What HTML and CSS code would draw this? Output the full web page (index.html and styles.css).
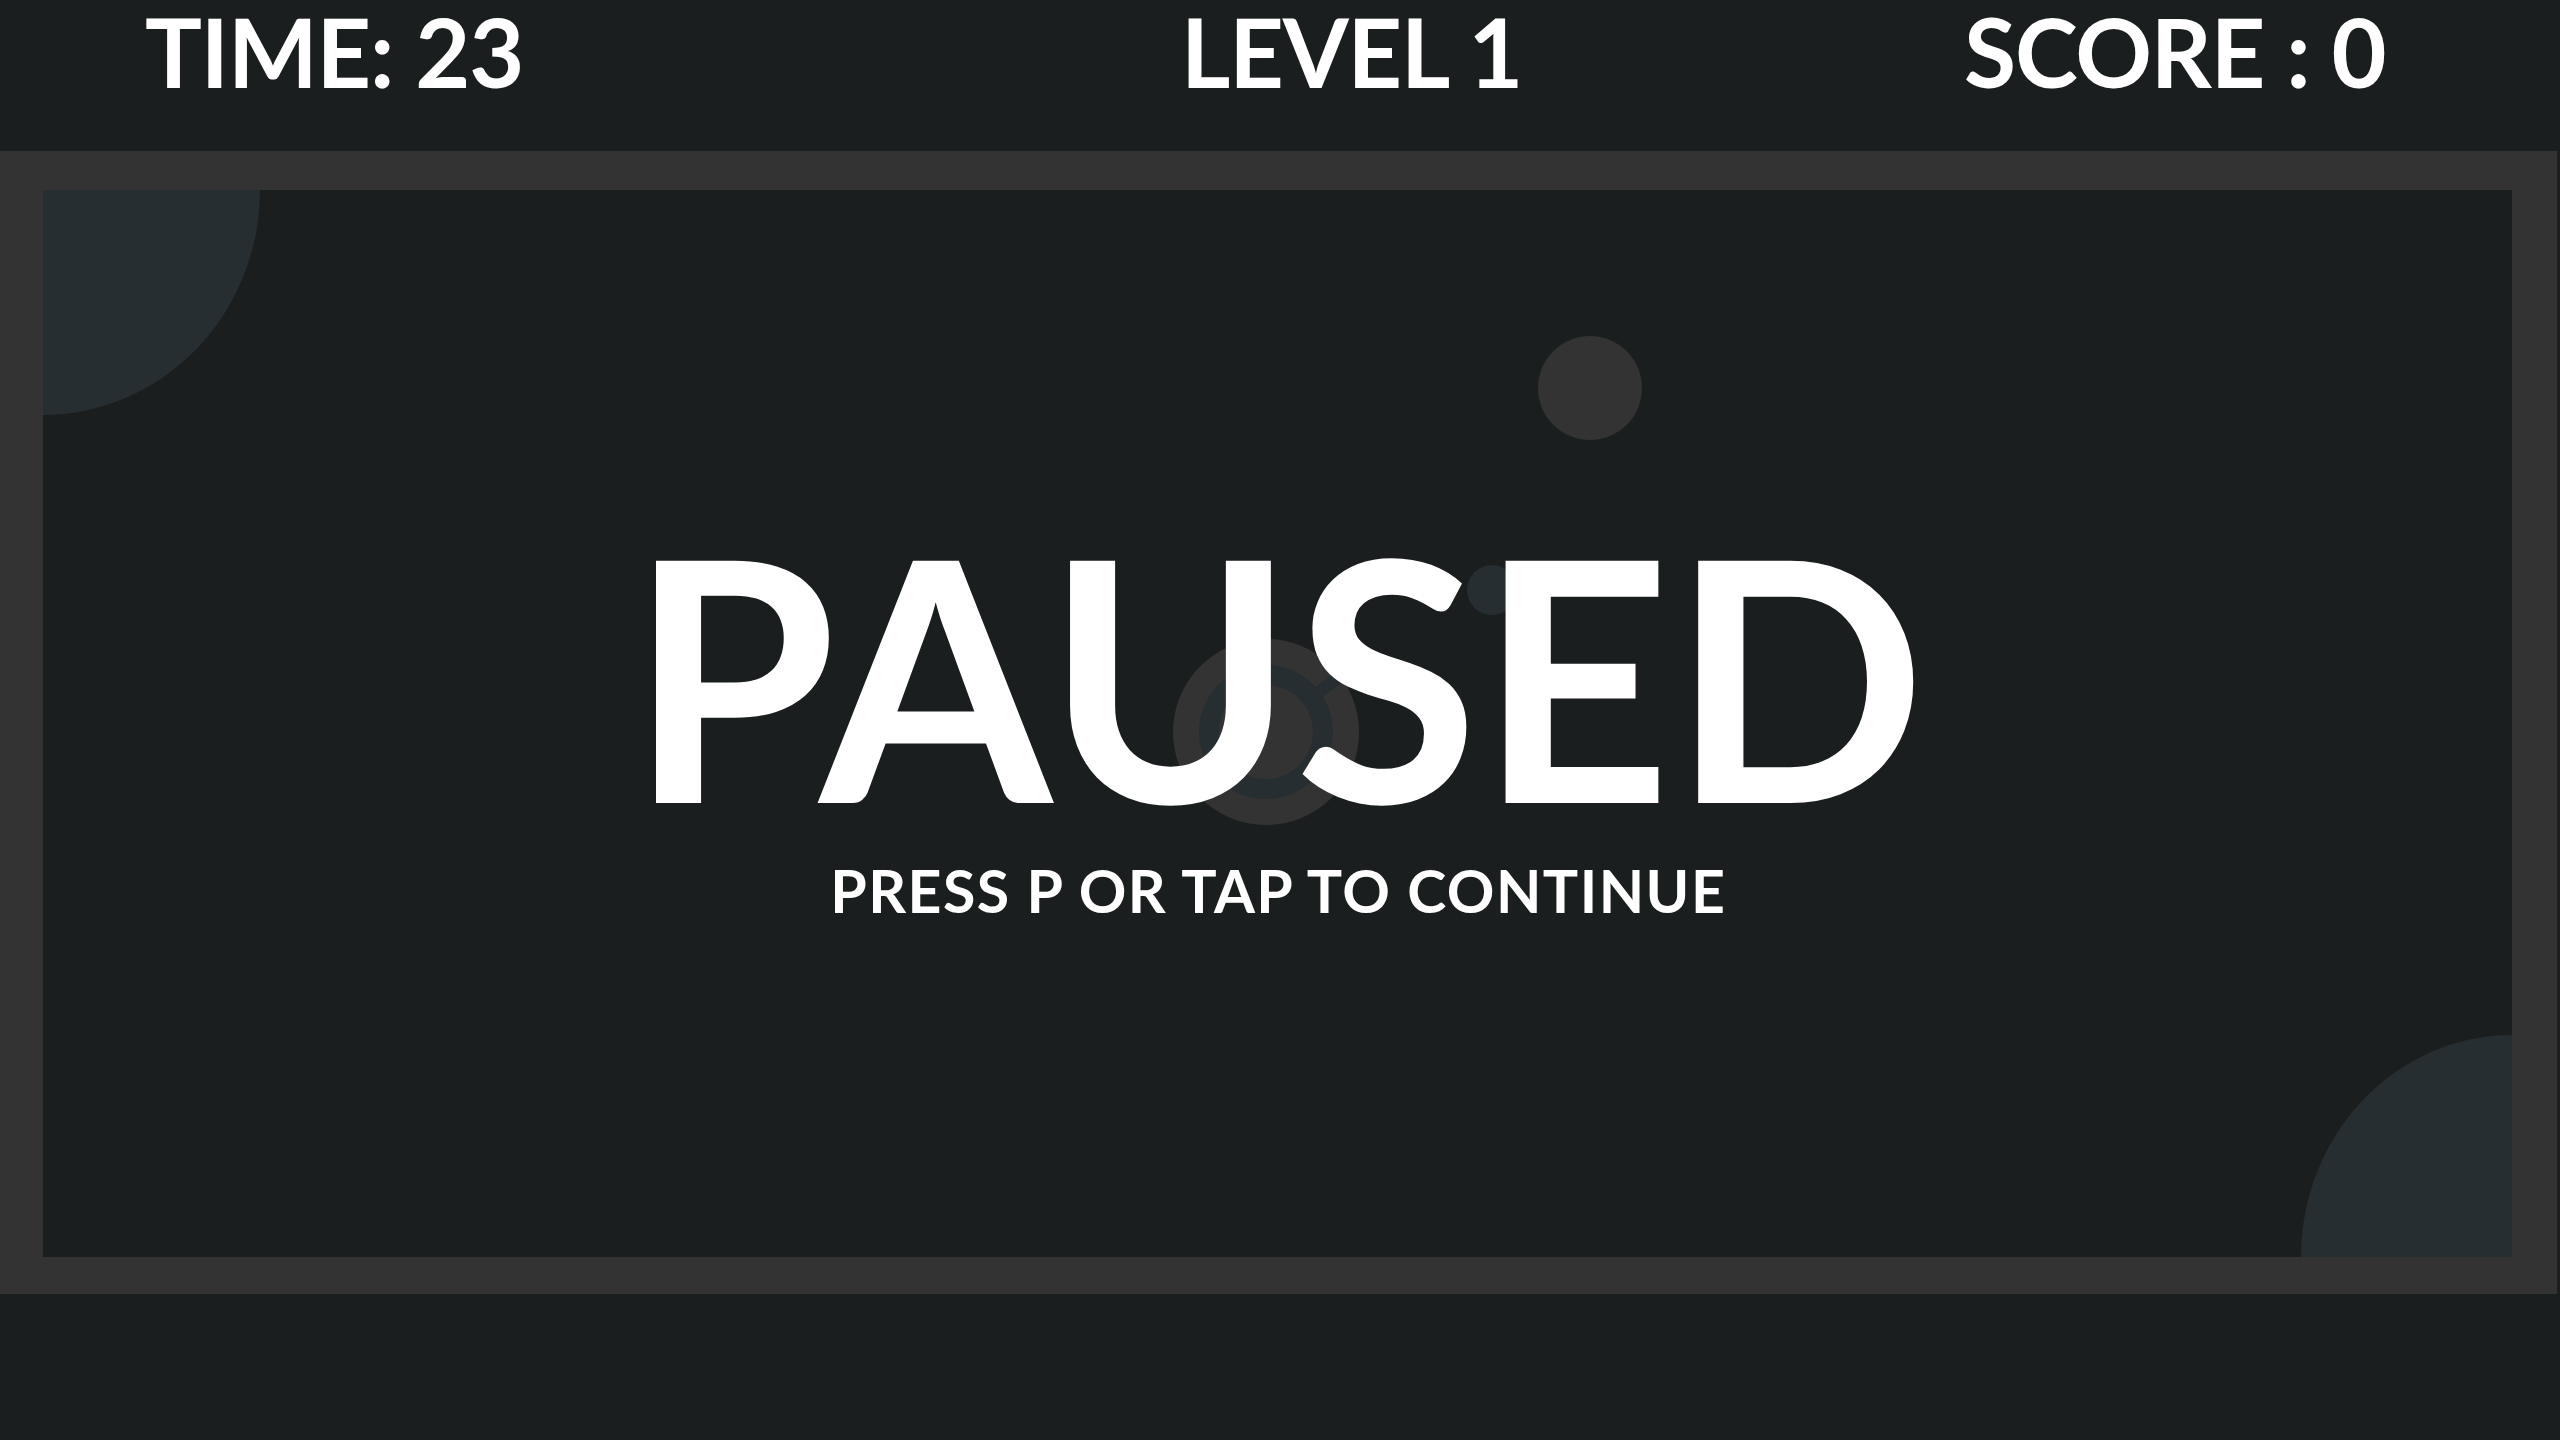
FILE: index.html
```html
<!DOCTYPE html>
<html lang="en">
<head>
<meta charset="utf-8">
<title>Paused</title>
<link rel="stylesheet" href="styles.css">
</head>
<body>
<header class="hud">
  <div class="hud-item">TIME: 23</div>
  <div class="hud-item">LEVEL 1</div>
  <div class="hud-item">SCORE : 0</div>
</header>
<main class="frame">
  <div class="arena">
    <svg class="scene" width="2469" height="1067" viewBox="0 0 2469 1067" xmlns="http://www.w3.org/2000/svg">
      <ellipse cx="0" cy="0" rx="217" ry="225" fill="#262e31"/>
      <ellipse cx="2469" cy="1067" rx="211" ry="222" fill="#262e31"/>
      <circle cx="1547" cy="198" r="52" fill="#333333"/>
      <circle cx="1449" cy="400" r="25" fill="#262e31"/>
      <g class="turret">
        <circle cx="1223" cy="542" r="93" fill="#333333"/>
        <g transform="translate(1223 542) rotate(-37)">
          <rect x="0" y="-6" width="112" height="12" fill="#262e31"/>
          <rect x="96" y="-20" width="15" height="40" fill="#262e31"/>
        </g>
        <circle cx="1223" cy="542" r="67" fill="#262e31"/>
        <circle cx="1223" cy="542" r="47" fill="#333333"/>
      </g>
    </svg>
    <div class="overlay">
      <h1 class="title">PAUSED</h1>
      <p class="hint">PRESS P OR TAP TO CONTINUE</p>
    </div>
  </div>
</main>
</body>
</html>
```

FILE: styles.css
```css
html, body {
  margin: 0;
  padding: 0;
  background: #1b1e1f;
  color: #ffffff;
  font-family: "Lato", "Open Sans", sans-serif;
  font-weight: 700;
  overflow: hidden;
}

.hud {
  height: 151px;
  box-sizing: border-box;
  padding: 4px 0 0 145px;
  display: grid;
  grid-template-columns: 1036px 783px auto;
  align-items: start;
}

.hud-item {
  font-size: 95px;
  line-height: 1;
  letter-spacing: -0.012em;
  white-space: nowrap;
}

.frame {
  width: 2557px;
  box-sizing: border-box;
  border-style: solid;
  border-color: #333333;
  border-width: 39px 45px 37px 43px;
}

.arena {
  position: relative;
  height: 1067px;
  overflow: hidden;
  background: #1b1e1f;
}

.scene {
  position: absolute;
  left: 0;
  top: 0;
  display: block;
}

.overlay {
  position: relative;
  z-index: 1;
  display: flex;
  flex-direction: column;
  align-items: center;
  padding-top: 316px;
}

.title {
  margin: 0;
  font-size: 335px;
  line-height: 1;
  font-weight: 700;
  letter-spacing: 0;
}

.hint {
  margin: 20px 0 0 0;
  font-size: 59px;
  line-height: 1;
  letter-spacing: 0.025em;
  padding-left: 0.025em;
}
```
